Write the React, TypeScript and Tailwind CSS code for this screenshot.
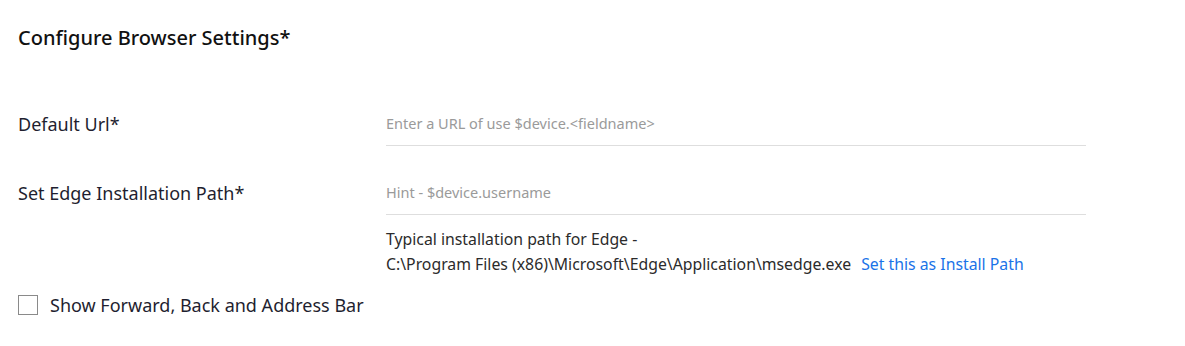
import React, { useState } from 'react';

const FieldRow: React.FC<{ label: string; placeholder: string }> = ({ label, placeholder }) => (
  <div className="flex items-start">
    <label className="w-[368px] shrink-0 pt-[1px] text-[18px] leading-[24px] text-[#1f1f30]">{label}</label>
    <div className="w-[700px]">
      <input
        type="text"
        placeholder={placeholder}
        className="w-full border-b border-[#dedede] pb-[11px] text-[14.5px] leading-[22px] text-[#333] placeholder:text-[#9a9a9a] outline-none"
      />
    </div>
  </div>
);

const App: React.FC = () => {
  const [showBar, setShowBar] = useState(false);

  return (
    <div className="w-[1185px] h-[346px] bg-white px-[18px] pt-[25px] font-['Noto_Sans',sans-serif]">
      <h2 className="text-[20px] leading-[26px] font-medium text-[#111]">Configure Browser Settings*</h2>

      <div className="mt-[60px] flex flex-col gap-[34px]">
        <FieldRow label="Default Url*" placeholder="Enter a URL of use $device.<fieldname>" />
        <div>
          <FieldRow label="Set Edge Installation Path*" placeholder="Hint - $device.username" />
          <div className="ml-[368px] mt-[12px] text-[15.8px] leading-[25px] text-[#2b2b2b]">
            <div>Typical installation path for Edge -</div>
            <div>
              C:\Program Files (x86)\Microsoft\Edge\Application\msedge.exe
              <button className="ml-[10px] text-[#1a73e8]">Set this as Install Path</button>
            </div>
          </div>
        </div>
      </div>

      <label className="mt-[16px] flex items-center gap-[12px] cursor-pointer">
        <span
          onClick={() => setShowBar(!showBar)}
          className="w-[20px] h-[20px] border border-[#8a8a8a] bg-white shrink-0"
        >
          {showBar && <span className="block w-full h-full bg-[#1a73e8]" />}
        </span>
        <span className="text-[18px] leading-[24px] text-[#1f1f30]">Show Forward, Back and Address Bar</span>
      </label>
    </div>
  );
};

export default App;
